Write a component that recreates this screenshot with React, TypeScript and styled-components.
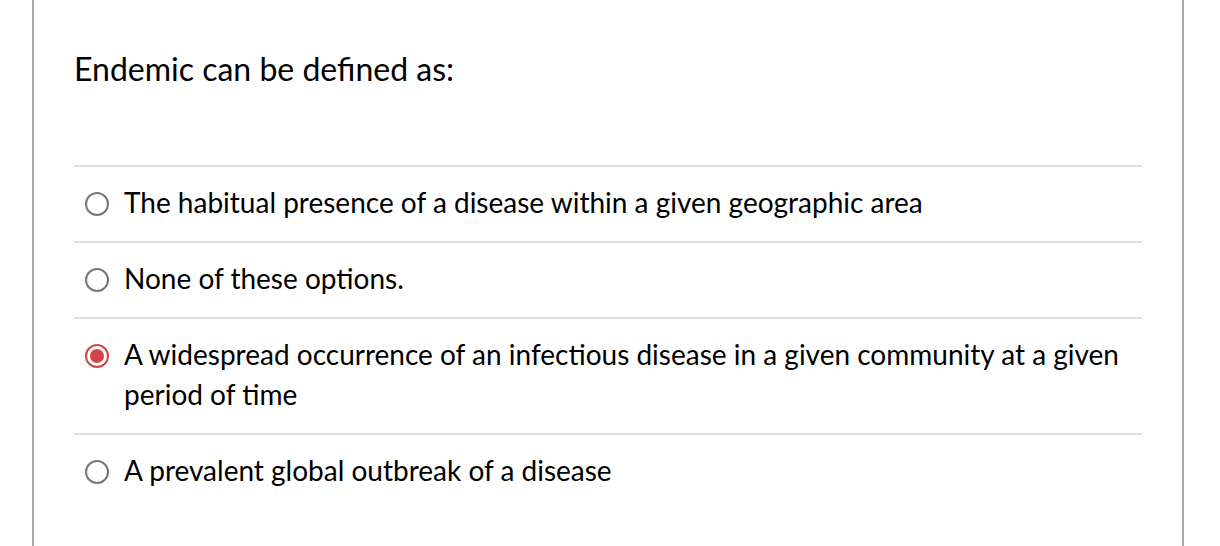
import React from "react";
import styled, { createGlobalStyle } from "styled-components";

const GlobalStyle = createGlobalStyle`
	html, body {
		margin: 0;
		padding: 0;
		background: #fff;
	}
	body {
		font-family: Lato, "Open Sans", sans-serif;
		color: #000;
	}
`;

const Card = styled.div`
	margin-left: 32px;
	width: 1152px;
	box-sizing: border-box;
	min-height: 546px;
	border-left: 2px solid #aaa;
	border-right: 2px solid #aaa;
	padding: 49px 40px 0;
`;

const Question = styled.div`
	font-size: 32px;
	line-height: 40px;
	margin-bottom: 76px;
`;

const Answers = styled.div`
	display: flex;
	flex-direction: column;
`;

const Answer = styled.label`
	display: flex;
	align-items: flex-start;
	gap: 15px;
	border-top: 2px solid #ddd;
	padding: 15px 0 19px 11px;
	font-size: 28px;
	line-height: 40px;
`;

const Radio = styled.span<{ $checked?: boolean }>`
	flex: none;
	box-sizing: border-box;
	width: 24px;
	height: 24px;
	margin-top: 10px;
	border-radius: 50%;
	border: 2px solid ${(p) => (p.$checked ? "#d04545" : "#777")};
	display: flex;
	align-items: center;
	justify-content: center;

	&::after {
		content: "";
		display: ${(p) => (p.$checked ? "block" : "none")};
		width: 14px;
		height: 14px;
		border-radius: 50%;
		background: #d04545;
	}
`;

const answers = [
	{ text: "The habitual presence of a disease within a given geographic area", checked: false },
	{ text: "None of these options.", checked: false },
	{
		text: "A widespread occurrence of an infectious disease in a given community at a given period of time",
		checked: true,
	},
	{ text: "A prevalent global outbreak of a disease", checked: false },
];

export default function App() {
	return (
		<>
			<GlobalStyle />
			<Card>
				<Question>Endemic can be defined as:</Question>
				<Answers>
					{answers.map((a) => (
						<Answer key={a.text}>
							<Radio $checked={a.checked} />
							<span>{a.text}</span>
						</Answer>
					))}
				</Answers>
			</Card>
		</>
	);
}
